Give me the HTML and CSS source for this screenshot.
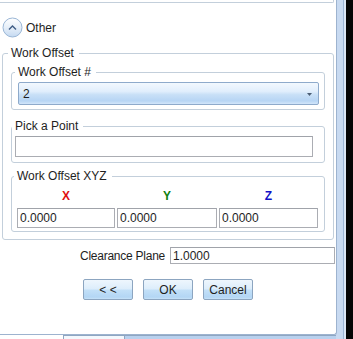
FILE: index.html
```html
<!DOCTYPE html>
<html lang="en">

<head>
  <meta charset="UTF-8" />
  <meta name="viewport" content="width=device-width, initial-scale=1.0" />
  <title>Work Offset</title>
  <link rel="stylesheet" href="styles.css">
</head>

<body>
  <div class="window">
    <div class="panel">
      <div class="prevGroup"></div>

      <div class="expander">
        <span class="expButton">
          <svg width="21" height="21" viewBox="0 0 21 21">
            <defs>
              <linearGradient id="expFill" x1="0" y1="0" x2="0" y2="1">
                <stop offset="0" stop-color="#ffffff" />
                <stop offset="0.5" stop-color="#e6eff9" />
                <stop offset="1" stop-color="#c4d9f1" />
              </linearGradient>
            </defs>
            <circle cx="10.5" cy="10.5" r="9.5" fill="url(#expFill)" stroke="#9ab6d6" />
            <path d="M7 12.5 L10.5 9 L14 12.5" fill="none" stroke="#3f5d84" stroke-width="1.4" />
          </svg>
        </span>
        <span class="expLabel">Other</span>
      </div>

      <fieldset class="group outer">
        <legend>Work Offset</legend>

        <fieldset class="group inner numGroup">
          <legend>Work Offset #</legend>
          <div class="combo">
            <span>2</span>
            <svg width="5" height="3" viewBox="0 0 5 3">
              <path d="M0 0 L5 0 L2.5 3 Z" fill="#4b5d74" />
            </svg>
          </div>
        </fieldset>

        <fieldset class="group inner pickGroup">
          <legend>Pick a Point</legend>
          <input class="textBox pickBox" type="text" value="" />
        </fieldset>

        <fieldset class="group inner xyzGroup">
          <legend>Work Offset XYZ</legend>
          <div class="xyzGrid">
            <span class="axis axisX">X</span>
            <span class="axis axisY">Y</span>
            <span class="axis axisZ">Z</span>
            <input class="textBox" type="text" value="0.0000" />
            <input class="textBox" type="text" value="0.0000" />
            <input class="textBox" type="text" value="0.0000" />
          </div>
        </fieldset>
      </fieldset>

      <div class="clearance">
        <label for="clearance">Clearance Plane</label>
        <input class="textBox clearBox" id="clearance" type="text" value="1.0000" />
      </div>

      <div class="buttons">
        <button class="winButton" type="button">&lt; &lt;</button>
        <button class="winButton" type="button">OK</button>
        <button class="winButton" type="button">Cancel</button>
      </div>
    </div>

    <div class="tabs">
      <span class="tabGap"></span>
      <span class="tab"></span>
      <span class="tabRest"></span>
    </div>
  </div>
</body>

</html>
```

FILE: styles.css
```css
body {
  margin: 0;
  width: 353px;
  height: 339px;
  overflow: hidden;
  background: #050505;
  font-family: 'Liberation Sans', Arial, sans-serif;
  font-size: 12px;
  color: #1e1e1e;
}

.window {
  width: 346px;
  height: 339px;
  background: linear-gradient(to right, #c8daf1 343px, #9cb6d6 343px, #9cb6d6 344px, #dbe7f6 344px);
}

.panel {
  box-sizing: border-box;
  width: 337px;
  height: 335px;
  background: #ffffff;
  border-right: 1px solid #9db3cf;
  border-bottom: 1px solid #9db3cf;
  border-bottom-right-radius: 3px;
}

.prevGroup {
  box-sizing: border-box;
  width: 334px;
  height: 3px;
  border-right: 1px solid #c3cfdb;
  border-bottom: 1px solid #c3cfdb;
  border-bottom-right-radius: 2px;
}

.expander {
  display: flex;
  align-items: center;
  height: 21px;
  margin-top: 14px;
  padding-left: 2px;
}

.expButton {
  display: block;
  width: 21px;
  height: 21px;
}

.expButton svg {
  display: block;
}

.expLabel {
  margin-left: 3px;
  line-height: 14px;
  padding-top: 1px;
}

.group {
  box-sizing: border-box;
  margin: 0;
  border: 1px solid #c3cfdb;
  border-radius: 3px;
  min-width: 0;
}

.group legend {
  padding: 0 5px 0 3px;
  margin-left: -3px;
  line-height: 14px;
  height: 14px;
}

.outer {
  width: 332px;
  margin: 8px 0 0 2px;
  padding: 0 8px 7px 8px;
}

.numGroup {
  margin-top: 5px;
  padding: 3px 5px 4px 6px;
}

.pickGroup {
  margin-top: 9px;
  padding: 3px 5px 5px 3px;
}

.xyzGroup {
  margin-top: 6px;
  padding: 6px 5px 3px 5px;
}

.combo {
  box-sizing: border-box;
  height: 23px;
  display: flex;
  align-items: center;
  justify-content: space-between;
  padding: 0 6px 0 4px;
  border: 1px solid #8eaacb;
  border-radius: 2px;
  background: linear-gradient(#f2f8fe, #e1eefc 40%, #c9e0f7 55%, #b7d5f4 85%, #d2e6fa);
}

.combo svg {
  display: block;
  margin-top: 1px;
}

.textBox {
  box-sizing: border-box;
  display: block;
  margin: 0;
  padding: 0 2px;
  border: 1px solid #abadb3;
  border-top-color: #a0a3aa;
  background: #ffffff;
  font-family: 'Liberation Sans', Arial, sans-serif;
  font-size: 12px;
  color: #1e1e1e;
  outline: none;
}

.pickBox {
  width: 298px;
  height: 21px;
}

.xyzGrid {
  display: grid;
  grid-template-columns: 98px 100px 99px;
  column-gap: 2px;
  row-gap: 5px;
}

.xyzGrid .textBox {
  width: 100%;
  height: 20px;
}

.axis {
  text-align: center;
  font-weight: bold;
  line-height: 14px;
}

.axisX {
  color: #e01010;
}

.axisY {
  color: #108010;
}

.axisZ {
  color: #1010c8;
}

.clearance {
  display: flex;
  justify-content: flex-end;
  align-items: center;
  gap: 5px;
  margin-top: 7px;
  padding-right: 1px;
}

.clearance label {
  letter-spacing: -0.25px;
}

.clearBox {
  width: 165px;
  height: 17px;
}

.buttons {
  display: flex;
  gap: 10px;
  margin-top: 15px;
  padding-left: 83px;
}

.winButton {
  box-sizing: border-box;
  width: 50px;
  height: 21px;
  padding: 0;
  border: 1px solid #8ca5c0;
  border-radius: 2px;
  background: linear-gradient(#eef6fd, #dcedfb 48%, #c3e0f8 52%, #b3d6f4 90%, #c7e2f8);
  font-family: 'Liberation Sans', Arial, sans-serif;
  font-size: 12px;
  color: #1e1e1e;
}

.tabs {
  display: flex;
  height: 4px;
}

.tabGap {
  width: 63px;
  background: #ffffff;
}

.tab {
  box-sizing: border-box;
  width: 62px;
  background: #f3f8fd;
  border: 1px solid #8ea6c2;
  border-bottom: none;
}

.tabRest {
  width: 211px;
  background: #b9d1ee;
  border-top: 1px solid #8ea6c2;
}
```
